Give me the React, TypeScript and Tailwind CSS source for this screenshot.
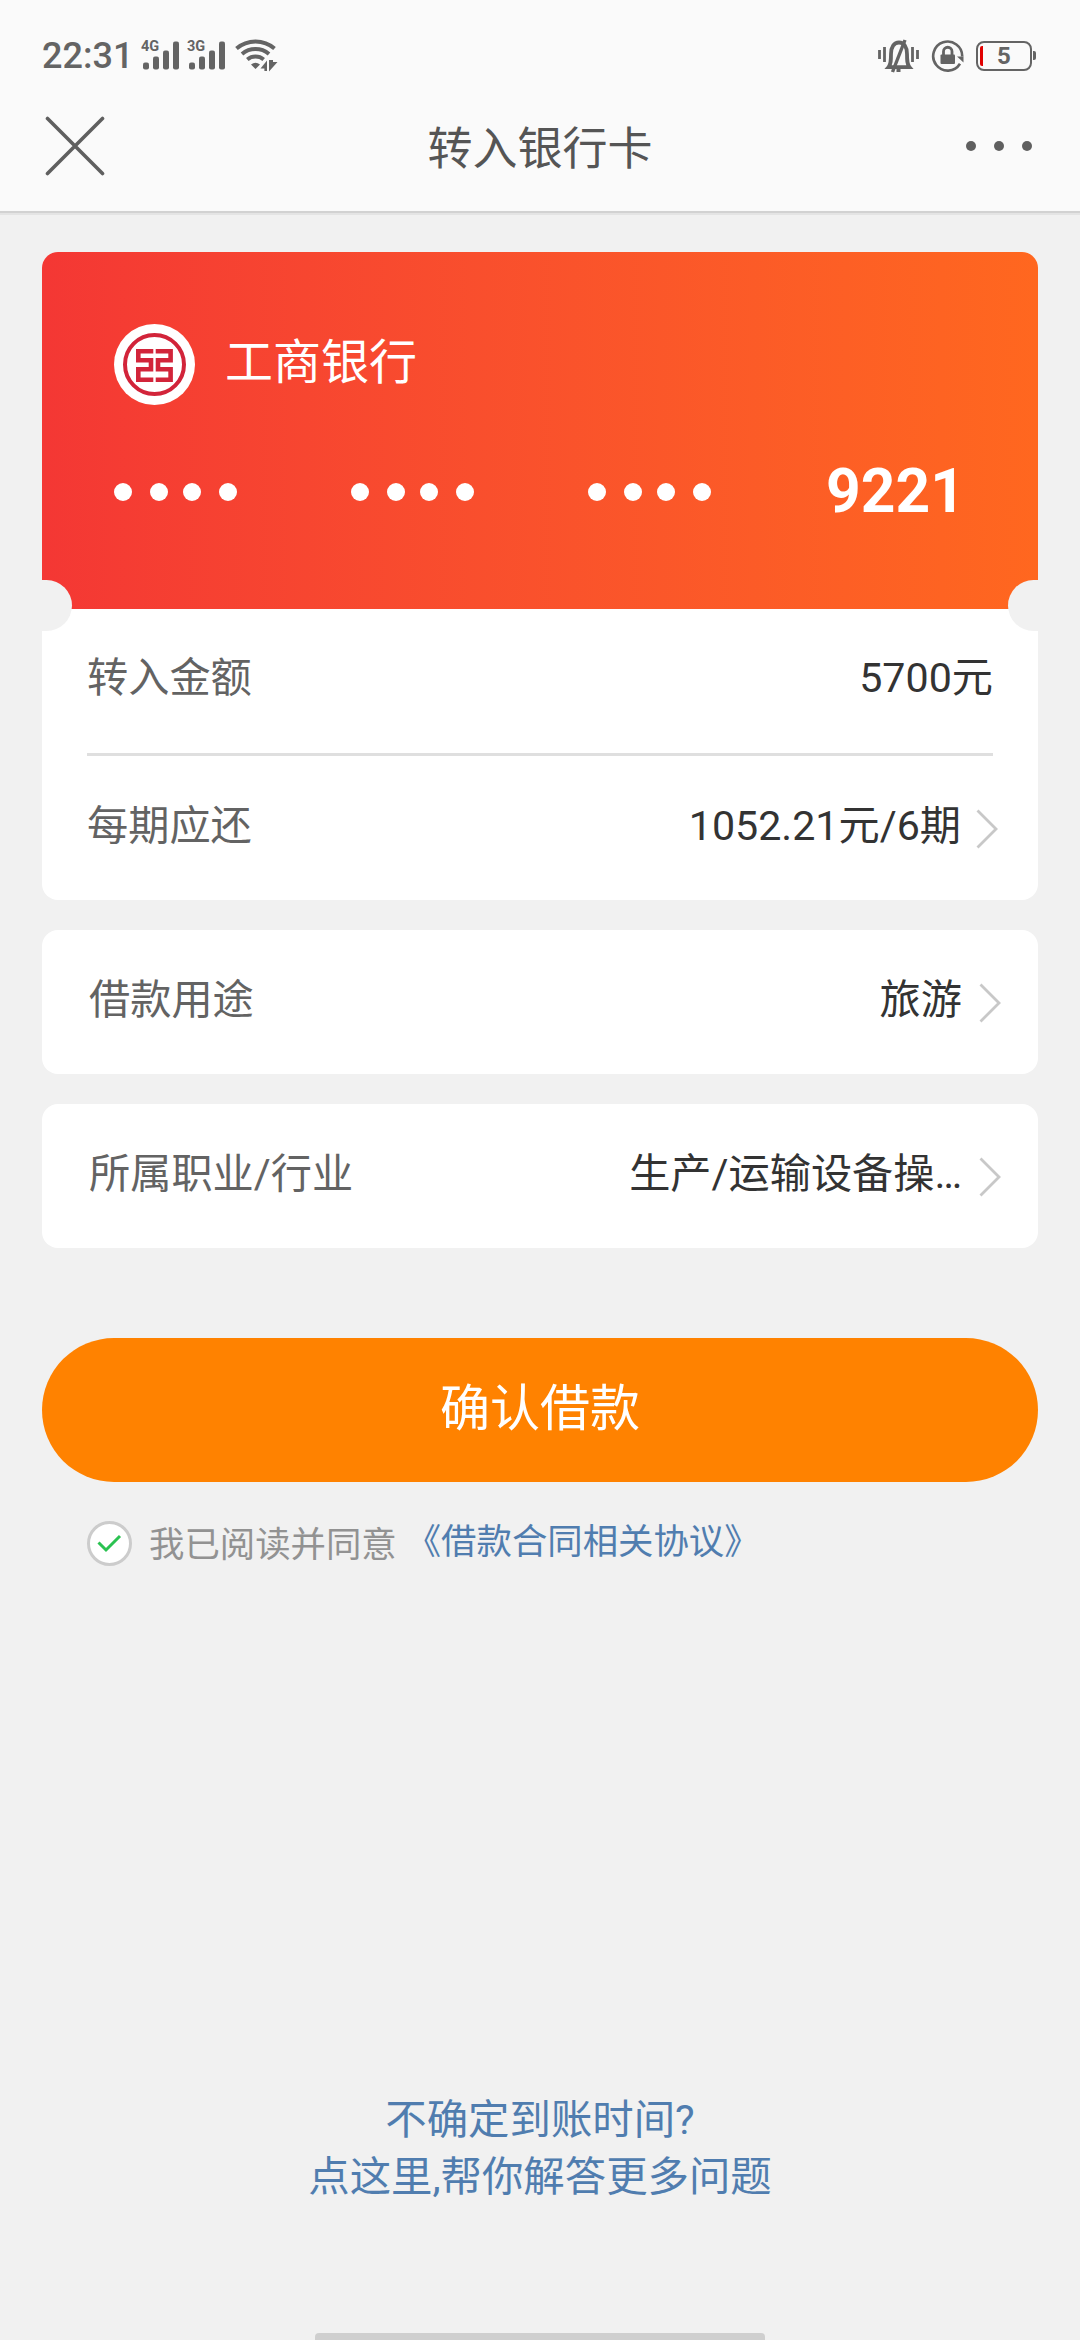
import { ReactNode } from 'react';

const maskGroups = [0, 1, 2];

const signalBars = [
  { x: 3, y: 25, h: 7 },
  { x: 13, y: 19, h: 13 },
  { x: 23, y: 13, h: 19 },
  { x: 33, y: 4, h: 28 },
];

const Signal = ({ label }: { label: string }) => (
  <svg width="40" height="40" viewBox="0 0 40 40" fill="#646464">
    <text
      x="1"
      y="15"
      fontSize="14.500"
      fontWeight="700"
      className="font-['Roboto',sans-serif]"
    >
      {label}
    </text>
    {signalBars.map((b) => (
      <rect key={b.x} x={b.x} y={b.y + 1.5} width="6" height={b.h} rx="2" />
    ))}
  </svg>
);

const Wifi = () => (
  <svg width="44" height="34" viewBox="0 0 44 34" fill="none">
    <g stroke="#646464" strokeWidth="4">
      <path d="M1.5 9.5a29 29 0 0 1 38 0" />
      <path d="M7 15a21 21 0 0 1 27 0" />
      <path d="M12.3 20.5a13 13 0 0 1 16.4 0" />
    </g>
    <path
      d="M16 25.5q4.500-3.500 9 0L20.500 30ZM25.500 29.500 32 21.500v10.500h-2.600v-2.500ZM34 21v11.500l8.500-9.500h-4.500v-2Z"
      fill="#646464"
    />
  </svg>
);

const SilentBell = () => (
  <svg width="42" height="36" viewBox="0 0 42 36" fill="none" stroke="#646464">
    <path d="M1.5 12v9M6.5 9v15M34.5 9v15M39.5 12v9" strokeWidth="2.8" />
    <path
      d="M10.5 29.2c2.5-3 2.5-7 2.5-13.2 0-7 3-11.500 8-11.500s8 4.500 8 11.500c0 6.200 0 10.200 2.500 13.200Z"
      strokeWidth="3.8"
    />
    <path d="M27 2 14.500 34" strokeWidth="3.4" />
    <path d="M18.500 32.500h4" strokeWidth="3" />
  </svg>
);

const RotationLock = () => (
  <svg width="34" height="34" viewBox="0 0 34 34" fill="none">
    <path
      d="M31.2 17.5A14.500 14.500 0 1 0 29 24.800"
      stroke="#646464"
      strokeWidth="2.6"
    />
    <path d="M26 17.500h6.500v6Z" fill="#646464" />
    <rect x="9.500" y="15.500" width="14.500" height="9.500" rx="1" fill="#646464" />
    <path
      d="M12.500 16v-3.500a4.200 4.200 0 0 1 8.500 0V16"
      stroke="#646464"
      strokeWidth="2.8"
    />
  </svg>
);

const Battery = () => (
  <div className="flex items-center">
    <div className="relative flex h-[30px] w-[56px] items-center justify-center rounded-[8px] border-2 border-[#646464] text-[24px] leading-none font-bold text-[#646464]">
      <span className="absolute top-[3px] left-[2px] h-[20px] w-[3px] rounded-l-[2px] bg-[#e10000]" />
      5
    </div>
    <div className="ml-px h-[9px] w-[3px] rounded-r-[2px] bg-[#646464]" />
  </div>
);

const BankLogo = () => (
  <svg width="81" height="81" viewBox="0 0 81 81">
    <circle cx="40.5" cy="40.5" r="40.5" fill="#fff" />
    <g fill="none" stroke="#d2243a">
      <circle cx="40.5" cy="40.5" r="29.5" strokeWidth="4" />
      <g strokeWidth="4.6">
        <path d="M39.300 27.300H24.300v9h12.700v9H24.300v10.400h15" />
        <path d="M41.700 27.300h14.900v9H44v9h12.600v10.400H41.700" />
      </g>
    </g>
  </svg>
);

const Chevron = () => (
  <svg width="24" height="40" viewBox="0 0 24 40" fill="none">
    <path d="M1.5 1.5 20 20 1.5 38.5" stroke="#c8c8c8" strokeWidth="2.8" />
  </svg>
);

const Row = ({ label, children }: { label: string; children: ReactNode }) => (
  <section className="mt-[30px] flex h-[144px] items-center justify-between rounded-[16px] bg-white pr-[35px] pb-[2px] pl-[47px] text-[41.2px]">
    <span className="text-[#636363]">{label}</span>
    <div className="flex items-center text-[#333]">
      {children}
      <span className="mt-[5px] ml-[17px]">
        <Chevron />
      </span>
    </div>
  </section>
);

const App = () => {
  return (
    <div className="flex h-[2340px] w-[1080px] flex-col overflow-hidden bg-[#f1f1f1] font-['Roboto','Noto_Sans_CJK_SC',sans-serif]">
      <header className="h-[213px] shrink-0 border-b-2 border-[#d2d2d2] bg-[#fafafa] shadow-[0_2px_0_#e4e4e4]">
        <div className="flex h-[96px] items-center justify-between pt-[15px] pr-[44px] pl-[42px]">
          <div className="flex items-center">
            <span className="w-[98px] text-[36px] font-medium text-[#646464]">
              22:31
            </span>
            <Signal label="4G" />
            <span className="w-[6px]" />
            <Signal label="3G" />
            <span className="w-[9px]" />
            <Wifi />
          </div>
          <div className="flex items-center gap-[11px]">
            <SilentBell />
            <RotationLock />
            <Battery />
          </div>
        </div>
        <div className="flex h-[100px] items-center justify-between pr-[48px] pl-[45px]">
          <svg width="60" height="60" viewBox="0 0 60 60" fill="none">
            <path
              d="M2.5 2.5l55 55M57.5 2.5l-55 55"
              stroke="#5f5f5f"
              strokeWidth="3.6"
              strokeLinecap="round"
            />
          </svg>
          <h1 className="pt-[7px] pl-[9px] text-[45px] text-[#555]">
            转入银行卡
          </h1>
          <div className="flex gap-[18px]">
            <span className="size-[10px] rounded-full bg-[#5f5f5f]" />
            <span className="size-[10px] rounded-full bg-[#5f5f5f]" />
            <span className="size-[10px] rounded-full bg-[#5f5f5f]" />
          </div>
        </div>
      </header>

      <main className="flex flex-col px-[42px] pt-[39px]">
        {/* bank card */}
        <section className="relative overflow-hidden rounded-[16px] bg-white">
          <div className="h-[357px] bg-linear-to-r from-[#f43734] to-[#ff671f] px-[72px] pt-[72px] text-white">
            <div className="flex items-center">
              <BankLogo />
              <span className="ml-[30px] -mt-[4px] text-[48px] leading-[81px]">
                工商银行
              </span>
            </div>
            <div className="mt-[54px] flex h-[66px] items-center">
              {maskGroups.map((g) => (
                <div key={g} className="mr-[114px] flex">
                  <span className="mr-[18px] size-[18px] rounded-full bg-white" />
                  <span className="mr-[15px] size-[18px] rounded-full bg-white" />
                  <span className="mr-[18px] size-[18px] rounded-full bg-white" />
                  <span className="size-[18px] rounded-full bg-white" />
                </div>
              ))}
              <span className="ml-px text-[60.5px] leading-[66px] font-bold">
                9221
              </span>
            </div>
          </div>
          <span className="absolute top-[328px] left-0 h-[51px] w-[30px] rounded-r-[26px] bg-[#f1f1f1]" />
          <span className="absolute top-[328px] right-0 h-[51px] w-[30px] rounded-l-[26px] bg-[#f1f1f1]" />

          <div className="flex h-[144px] items-center justify-between pr-[45px] pb-[4px] pl-[45px] text-[41.2px]">
            <span className="text-[#636363]">转入金额</span>
            <span className="text-[#333]">5700元</span>
          </div>
          <div className="mx-[45px] h-[3px] bg-[#dfdfdf]" />
          <div className="flex h-[144px] items-center justify-between pr-[38px] pb-[2px] pl-[45px] text-[41.2px]">
            <span className="text-[#636363]">每期应还</span>
            <div className="flex items-center text-[#333]">
              1052.21元/6期
              <span className="mt-[5px] ml-[15px]">
                <Chevron />
              </span>
            </div>
          </div>
        </section>

        <Row label="借款用途">旅游</Row>
        <Row label="所属职业/行业">生产/运输设备操…</Row>

        <button
          type="button"
          className="mt-[90px] h-[144px] rounded-full bg-[#ff8200] pb-[1px] text-[50px] text-white"
        >
          确认借款
        </button>

        <div className="mt-[36px] flex h-[51px] items-center pl-[45px] text-[35.4px]">
          <span className="flex size-[45px] items-center justify-center rounded-full border-[3px] border-[#ccc] bg-white">
            <svg width="25" height="20" viewBox="0 0 25 20" fill="none">
              <path d="M1.5 8.5 9 16 23 2" stroke="#2bc251" strokeWidth="3" />
            </svg>
          </span>
          <span className="mt-[4px] ml-[17px] text-[#929292]">
            我已阅读并同意
          </span>
          <a href="#" className="-mt-[1px] ml-[9px] text-[#507daf]">
            《借款合同相关协议》
          </a>
        </div>
      </main>

      <footer className="mt-auto flex flex-col items-center">
        <a
          href="#"
          className="pb-[127px] text-center text-[41.4px] leading-[57px] text-[#507daf]"
        >
          不确定到账时间?
          <br />
          点这里,帮你解答更多问题
        </a>
        <div className="h-[7px] w-[450px] rounded-t-[4px] bg-[#cfcfcf]" />
      </footer>
    </div>
  );
};

export default App;
